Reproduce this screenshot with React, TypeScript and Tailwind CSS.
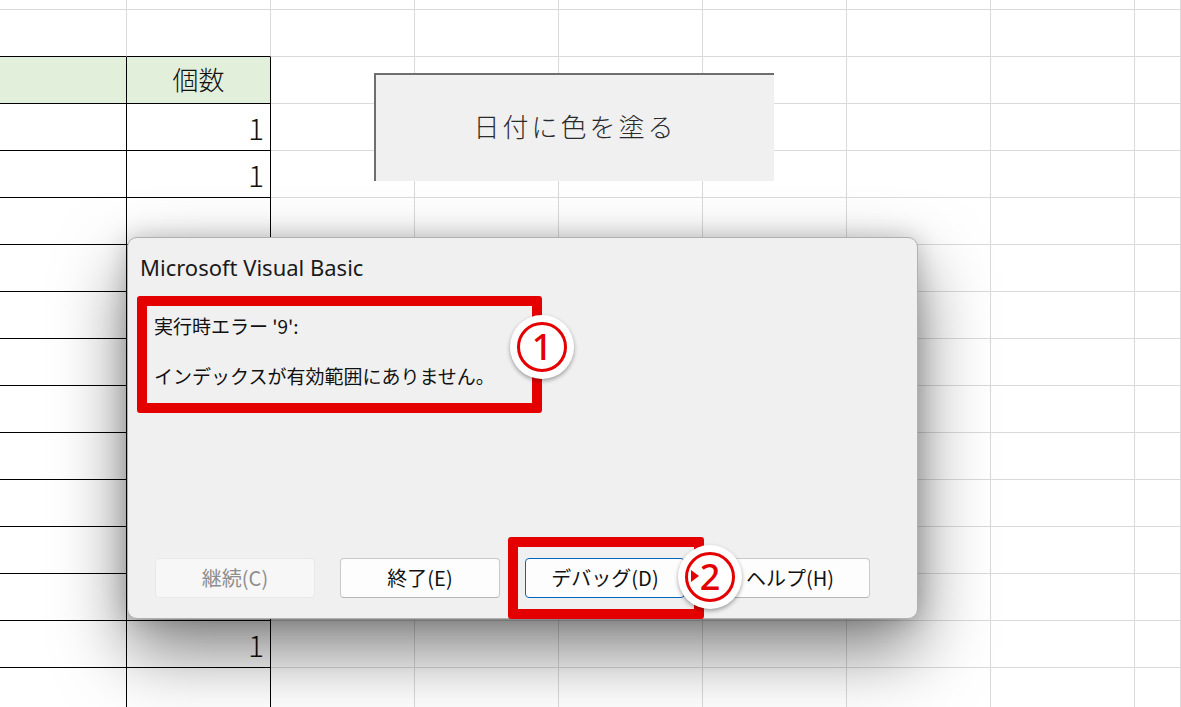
import React from "react"

const COLS = 9
const ROWS = 16
const ONES = [3, 4, 14]

const jp = { fontFamily: '"Noto Sans CJK JP", "Noto Sans", sans-serif' }
const ui = { fontFamily: '"Noto Sans", "Noto Sans CJK JP", sans-serif' }

function Cell({ r, c }: { r: number; c: number }) {
  const inTable = c <= 1 && r >= 2
  const header = inTable && r === 2
  // row above the table has a black bottom edge but grey right edge
  const topEdge = c <= 1 && r === 1
  let cls = "border-r border-b border-[#dadada]"
  if (inTable) cls = "border-r border-b border-black"
  else if (topEdge) cls = "border-r border-b border-r-[#dadada] border-b-black"
  return (
    <div
      className={`${cls} ${header ? "bg-[#e2efda]" : "bg-white"} flex items-center ${c === 1 && !header ? "justify-end pr-[6px]" : "justify-center"} overflow-hidden`}
      style={jp}
    >
      {header && c === 1 && <span className="text-[26px] font-light text-[#111] pb-[4px]">個数</span>}
      {c === 1 && ONES.includes(r) && <span className="text-[30px] font-light text-[#111]">1</span>}
    </div>
  )
}

function Badge({ n, left, top, arrow }: { n: string; left: number; top: number; arrow?: boolean }) {
  return (
    <div
      className="absolute w-[64px] h-[64px] rounded-full bg-white shadow-[0_2px_4px_rgba(0,0,0,0.35)] flex items-center justify-center"
      style={{ left, top }}
    >
      <div className="relative w-[50px] h-[50px] rounded-full border-[3px] border-[#e50000] flex items-center justify-center">
        {arrow && (
          <div className="absolute left-[3px] top-[15px] w-0 h-0 border-y-[6px] border-y-transparent border-l-[8px] border-l-[#e50000]" />
        )}
        <span className="text-[36px] leading-none font-medium text-[#e50000]" style={ui}>
          {n}
        </span>
      </div>
    </div>
  )
}

function DlgButton({ label, kind }: { label: string; kind: "off" | "plain" | "focus" }) {
  const look =
    kind === "off"
      ? "bg-[#f7f7f7] border-[#e8e8e8] text-[#8e8e8e]"
      : kind === "focus"
        ? "bg-[#fdfdfd] border-[#0067c0] text-[#111]"
        : "bg-[#fdfdfd] border-[#c9c9c9] border-b-[#b5b5b5] text-[#111]"
  return (
    <div className={`w-[160px] h-[40px] rounded-[4px] border flex items-center justify-center text-[20px] ${look}`} style={jp}>
      {label}
    </div>
  )
}

export default function App() {
  return (
    <div className="relative w-[1181px] h-[707px] overflow-hidden bg-white">
      {/* sheet */}
      <div className="grid grid-cols-[127px_repeat(7,144px)_1fr] grid-rows-[10px_repeat(15,47px)]">
        {Array.from({ length: ROWS }).map((_, r) =>
          Array.from({ length: COLS }).map((_, c) => <Cell key={`${r}-${c}`} r={r} c={c} />),
        )}
      </div>

      {/* macro button shape */}
      <div
        className="absolute left-[374px] top-[73px] w-[400px] h-[108px] bg-[#f0f0f0] border-l-2 border-t-2 border-[#6e6e6e] flex items-center justify-center"
        style={jp}
      >
        <span className="text-[26px] font-light tracking-[3px] text-[#2a2a2a] pb-[6px]">日付に色を塗る</span>
      </div>

      {/* error dialog */}
      <div className="absolute left-[127px] top-[237px] w-[791px] h-[382px] rounded-[10px] border border-[#b0b0b0] bg-[#f0f0f0] shadow-[0_32px_70px_rgba(0,0,0,0.5),0_0_24px_rgba(0,0,0,0.2)] flex flex-col">
        <div className="pt-[14px] pl-[12px] text-[22px] leading-[30px] text-[#1b1b1b]" style={ui}>
          Microsoft Visual Basic
        </div>
        <div className="mt-[30px] pl-[26px] flex flex-col gap-[22px] text-[19px] leading-[28px] text-[#111]" style={jp}>
          <div>実行時エラー '9':</div>
          <div>インデックスが有効範囲にありません。</div>
        </div>
        <div className="flex-1" />
        <div className="flex gap-[25px] pl-[27px] pb-[20px]">
          <DlgButton label="継続(C)" kind="off" />
          <DlgButton label="終了(E)" kind="plain" />
          <DlgButton label="デバッグ(D)" kind="focus" />
          <DlgButton label="ヘルプ(H)" kind="plain" />
        </div>
      </div>

      {/* annotations */}
      <div className="absolute left-[137px] top-[296px] w-[405px] h-[117px] border-[10px] border-[#e50000] rounded-[3px]" />
      <div className="absolute left-[508px] top-[537px] w-[196px] h-[82px] border-[10px] border-[#e50000] rounded-[3px]" />
      <Badge n="1" left={510} top={315} />
      <Badge n="2" left={678} top={545} arrow />
    </div>
  )
}
